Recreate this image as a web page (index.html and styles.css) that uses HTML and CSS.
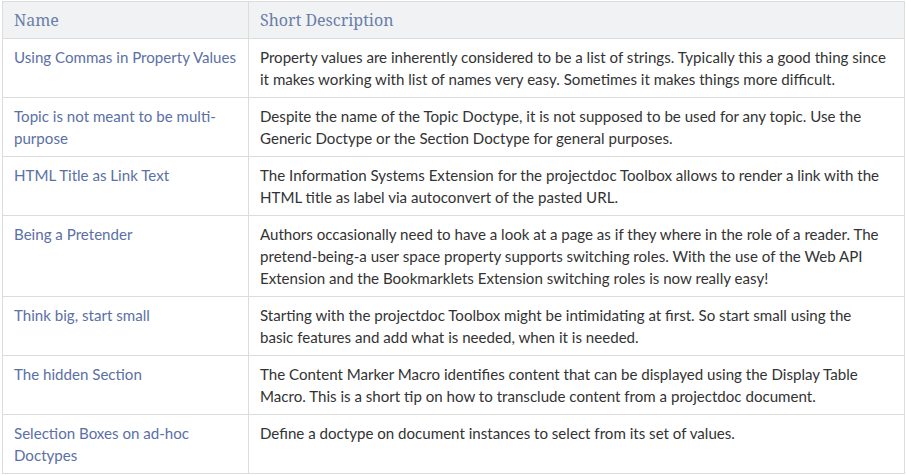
FILE: index.html
```html
<!DOCTYPE html>
<html>
<head>
<meta charset="utf-8">
<link rel="stylesheet" href="styles.css">
</head>
<body>
<table class="tips">
  <thead>
    <tr><th class="col-name">Name</th><th class="col-desc">Short Description</th></tr>
  </thead>
  <tbody>
    <tr><td class="name"><a class="link">Using Commas in Property Values</a></td><td class="desc">Property values are inherently considered to be a list of strings. Typically this a good thing since it makes working with list of names very easy. Sometimes it makes things more difficult.</td></tr>
    <tr><td class="name"><a class="link">Topic is not meant to be multi-purpose</a></td><td class="desc">Despite the name of the Topic Doctype, it is not supposed to be used for any topic. Use the Generic Doctype or the Section Doctype for general purposes.</td></tr>
    <tr><td class="name"><a class="link">HTML Title as Link Text</a></td><td class="desc">The Information Systems Extension for the projectdoc Toolbox allows to render a link with the HTML title as label via autoconvert of the pasted URL.</td></tr>
    <tr><td class="name"><a class="link">Being a Pretender</a></td><td class="desc">Authors occasionally need to have a look at a page as if they where in the role of a reader. The pretend-being-a user space property supports switching roles. With the use of the Web API Extension and the Bookmarklets Extension switching roles is now really easy!</td></tr>
    <tr><td class="name"><a class="link">Think big, start small</a></td><td class="desc">Starting with the projectdoc Toolbox might be intimidating at first. So start small using the basic features and add what is needed, when it is needed.</td></tr>
    <tr><td class="name"><a class="link">The hidden Section</a></td><td class="desc">The Content Marker Macro identifies content that can be displayed using the Display Table Macro. This is a short tip on how to transclude content from a projectdoc document.</td></tr>
    <tr><td class="name"><a class="link">Selection Boxes on ad-hoc Doctypes</a></td><td class="desc">Define a doctype on document instances to select from its set of values.</td></tr>
  </tbody>
</table>
</body>
</html>
```
FILE: styles.css
```css
html, body {
  margin: 0;
  padding: 0;
  background: #fff;
}
body {
  padding: 1px 0 0 2px;
}
.tips {
  border-collapse: collapse;
  width: 903px;
  font-family: "Lato", "Liberation Sans", sans-serif;
  font-size: 15.1px;
  line-height: 22px;
  color: #333;
}
.tips th, .tips td {
  border: 1px solid #dcdcdc;
  padding: 7px 11px 7px 11px;
  text-align: left;
  vertical-align: top;
}
.tips th {
  background: #f1f2f4;
  font-family: "Noto Serif", "DejaVu Serif", serif;
  font-weight: normal;
  font-size: 16px;
  color: #6a7ea8;
}
.tips .col-name {
  width: 226px;
  padding-right: 8px;
}
.tips .name {
  padding-right: 8px;
}
.tips .col-desc,
.tips .desc {
  padding-right: 18px;
}
.link {
  color: #5b70a5;
  text-decoration: none;
}
```
